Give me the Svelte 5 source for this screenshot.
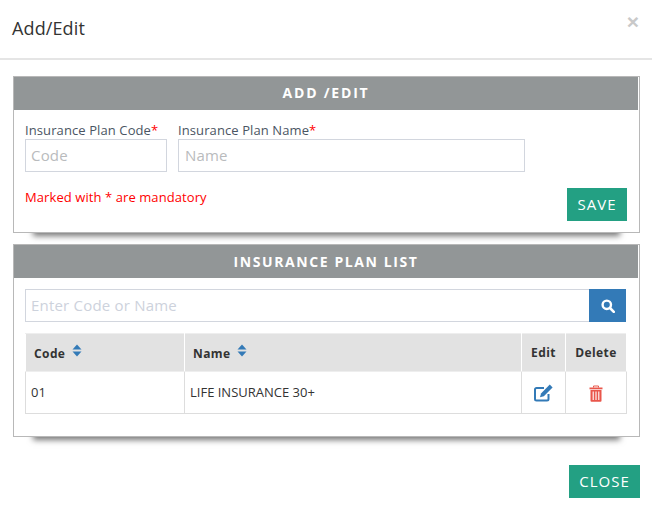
<script>
  const rows = [{ code: '01', name: 'LIFE INSURANCE 30+' }];
</script>

<div class="modal">
  <header class="modal-head">
    <h4>Add/Edit</h4>
    <span class="x">×</span>
  </header>
  <div class="modal-body">
    <section class="panel first">
      <h5 class="bar">ADD /EDIT</h5>
      <div class="inner form">
        <div class="fields">
          <label class="f code">
            <span>Insurance Plan Code<em>*</em></span>
            <input placeholder="Code" />
          </label>
          <label class="f name">
            <span>Insurance Plan Name<em>*</em></span>
            <input placeholder="Name" />
          </label>
        </div>
        <div class="foot">
          <p class="note">Marked with * are mandatory</p>
          <button class="btn save">SAVE</button>
        </div>
      </div>
    </section>

    <section class="panel second">
      <h5 class="bar">INSURANCE PLAN LIST</h5>
      <div class="inner list">
        <div class="search">
          <input placeholder="Enter Code or Name" />
          <button class="go" aria-label="Search">
            <svg viewBox="0 0 14 14" width="14" height="14">
              <circle cx="5.8" cy="5.8" r="4.2" fill="none" stroke="#fff" stroke-width="2.4" />
              <path d="M9 9l3.8 3.8" stroke="#fff" stroke-width="2.6" stroke-linecap="round" />
            </svg>
          </button>
        </div>
        <table>
          <thead>
            <tr>
              <th class="c1">Code <svg class="sort" viewBox="0 0 10 13" width="10" height="13"><path d="M5 0.5L9.5 5.5H0.5z" fill="#337ab7" /><path d="M5 12.5L9.5 7.5H0.5z" fill="#337ab7" /></svg></th>
              <th class="c2">Name <svg class="sort" viewBox="0 0 10 13" width="10" height="13"><path d="M5 0.5L9.5 5.5H0.5z" fill="#337ab7" /><path d="M5 12.5L9.5 7.5H0.5z" fill="#337ab7" /></svg></th>
              <th class="c3">Edit</th>
              <th class="c4">Delete</th>
            </tr>
          </thead>
          <tbody>
            {#each rows as r}
              <tr>
                <td class="t1">{r.code}</td>
                <td class="t2">{r.name}</td>
                <td class="ic">
                  <svg viewBox="0 0 19 18" width="19" height="18">
                    <path d="M14.5 10v5a1.5 1.5 0 0 1-1.5 1.5H2.5A1.5 1.5 0 0 1 1 15V5.5A1.5 1.5 0 0 1 2.5 4H10" fill="none" stroke="#337ab7" stroke-width="2" />
                    <path d="M15.8 0.6l2.8 2.8-8.8 8.8-3.8 1 1-3.8z" fill="#337ab7" />
                  </svg>
                </td>
                <td class="ic">
                  <svg viewBox="0 0 14 17" width="14" height="17">
                    <path d="M4.5 2.5V1h5v1.5" fill="none" stroke="#e9564b" stroke-width="1" />
                    <path d="M0.5 2.5h13v1.8H0.5z" fill="#e9564b" />
                    <path d="M1.5 5h11v10.8a1 1 0 0 1-1 1h-9a1 1 0 0 1-1-1z" fill="#e9564b" />
                    <path d="M4.2 6.5v8.4M7 6.5v8.4M9.8 6.5v8.4" stroke="#fff" stroke-width="1.1" />
                  </svg>
                </td>
              </tr>
            {/each}
          </tbody>
        </table>
      </div>
    </section>

    <div class="actions">
      <button class="btn close">CLOSE</button>
    </div>
  </div>
</div>

<style>
  :global(body) {
    margin: 0;
    background: #fff;
    font-family: "Open Sans", "Liberation Sans", sans-serif;
    color: #333;
  }
  .modal { width: 652px; height: 509px; overflow: hidden; }
  .modal-head {
    width: 627px;
    height: 58px;
    border-bottom: 2px solid #e5e5e5;
    display: flex;
    justify-content: space-between;
    padding: 0 13px 0 12px;
  }
  h4 { margin: 0; font-size: 18px; font-weight: 400; line-height: 57px; letter-spacing: 0.12px; color: #333; }
  .x { font-size: 21px; font-weight: 700; line-height: 44px; color: #c9c9c9; font-family: "Liberation Sans", sans-serif; }
  .modal-body { padding: 16px 12px 0 13px; }
  .panel {
    border: 1px solid #b8b8b8;
    background: #fff;
    box-shadow: 0 23px 6px -20px #777;
    box-sizing: border-box;
  }
  .first { height: 157px; }
  .second { height: 193px; margin-top: 11px; }
  .bar {
    margin: 0 1px 0 0;
    height: 33px;
    line-height: 33px;
    background: #929697;
    color: #fff;
    text-align: center;
    font-size: 14px;
    font-weight: 700;
    letter-spacing: 1.6px;
  }
  .first .bar { line-height: 31px; letter-spacing: 1.8px; }
  .inner { padding: 0 11px; }
  .fields { display: flex; gap: 11px; padding-top: 12px; }
  .f { display: flex; flex-direction: column; font-size: 13px; line-height: 16px; letter-spacing: 0.1px; color: #4a5563; }
  .f span { height: 17px; }
  .f em { font-style: normal; color: #f00; }
  .code input { width: 142px; }
  .name input { width: 347px; padding-left: 6px; }
  input {
    box-sizing: border-box;
    height: 33px;
    border: 1px solid #d2d6de;
    padding: 0 5px 2px;
    font: 15px "Open Sans", sans-serif;
    letter-spacing: 0.2px;
    outline: none;
    border-radius: 0;
    background: #fff;
  }
  input::placeholder { color: #b9bbbd; opacity: 1; }
  .foot { display: flex; justify-content: space-between; align-items: flex-start; margin-top: 16px; padding-right: 1px; }
  .note { margin: 0; font-size: 13px; line-height: 18px; letter-spacing: 0.08px; color: #f00; }
  .btn {
    border: 0;
    background: #23a083;
    color: #fff;
    font: 15px "Open Sans", sans-serif;
    letter-spacing: 1px;
    padding: 0 0 2px;
    height: 33px;
  }
  .save { width: 60px; }
  .list { padding-top: 11px; }
  .search { display: flex; }
  .search input { width: 565px; flex: none; }
  .search input::placeholder { color: #cdd2dc; }
  .go {
    width: 37px;
    height: 33px;
    margin-left: -1px;
    border: 0;
    padding: 0;
    background: #337ab7;
    display: flex;
    align-items: center;
    justify-content: center;
  }
  table {
    border-collapse: collapse;
    width: 602px;
    table-layout: fixed;
    margin-top: 11px;
    font-size: 13px;
  }
  th, td { border: 1px solid #ddd; }
  thead tr { height: 38px; }
  tbody tr { height: 42px; }
  th {
    background: #e2e2e2;
    font-weight: 700;
    font-size: 12px;
    letter-spacing: 0.4px;
    color: #333;
    padding: 0;
    border-color: #eee #fff #eee #fff;
  }
  th.c1, th.c2 { text-align: left; padding-left: 8px; }
  .sort { vertical-align: 1px; margin-left: 3px; }
  .c1 { width: 150px; }
  .c2 { width: 328px; }
  .c3 { width: 43px; }
  td { padding: 0 0 2px; color: #333; }
  .t1, .t2 { padding-left: 5px; }
  .ic { text-align: center; padding: 0; }
  .ic svg { display: inline-block; vertical-align: middle; }
  .actions { display: flex; justify-content: flex-end; margin-top: 28px; }
  .close { width: 71px; }
</style>
